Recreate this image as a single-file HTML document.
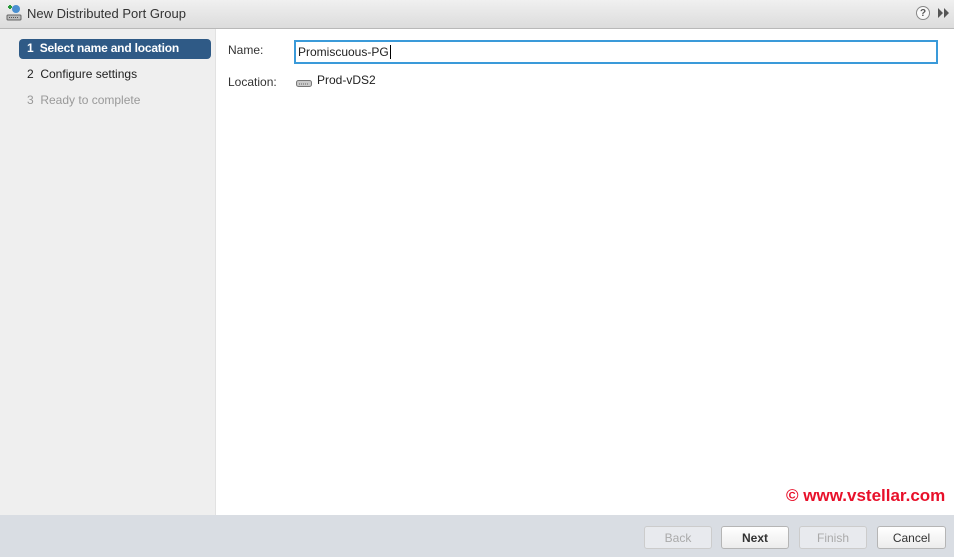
<!DOCTYPE html>
<html><head><style>
body{margin:0;width:954px;height:557px;position:relative;overflow:hidden;font-family:"Liberation Sans",sans-serif;font-size:12px;background:#fff;color:#333}
.hdr{position:absolute;left:0;top:0;width:954px;height:28px;background:linear-gradient(#f0f0f0,#dcdcdc);border-bottom:1px solid #b8b8b8}
.hdr .t{position:absolute;left:27px;top:6px;font-size:13px;color:#333}
.side{position:absolute;left:0;top:29px;width:215px;height:486px;background:#efefef;border-right:1px solid #e2e2e2}
.step{position:absolute;left:19px;width:192px;height:20px;line-height:19px;padding-left:8px;box-sizing:border-box;font-size:12px}
.sel{background:#2f5a86;color:#fff;font-weight:bold;border-radius:4px;letter-spacing:-0.2px}
.foot{position:absolute;left:0;top:515px;width:954px;height:42px;background:#d9dde3}
.btn{position:absolute;top:526px;height:23px;width:68px;border:1px solid #b5b5b5;border-radius:3px;background:linear-gradient(#fff,#ececec);text-align:center;line-height:23px;font-size:12px;color:#333;box-sizing:border-box}
.dis{color:#aaa;border-color:#ccc;background:#e8eaee}
</style></head><body>
<div class="hdr">
<svg style="position:absolute;left:5px;top:4px" width="18" height="18" viewBox="0 0 18 18"><circle cx="11" cy="5" r="4" fill="#4a8fd0"/><path d="M3 3h4M5 1v4" stroke="#2a9a3a" stroke-width="2"/><rect x="2" y="11" width="14" height="5" rx="1" fill="#bbb" stroke="#666"/><path d="M4 13.5h10" stroke="#555" stroke-dasharray="1 1"/></svg>
<div class="t">New Distributed Port Group</div>
<div style="position:absolute;left:916px;top:6px;width:14px;height:14px;border-radius:50%;border:1px solid #888;background:#fafafa;font-size:10px;font-weight:bold;text-align:center;line-height:14px;color:#555;box-sizing:border-box">?</div>
<svg style="position:absolute;left:938px;top:8px" width="12" height="10"><path d="M0 0L5 5L0 10ZM6 0L11 5L6 10Z" fill="#555"/></svg>
</div>
<div class="side">
<div class="step sel" style="top:10px">1&nbsp; Select name and location</div>
<div class="step" style="top:36px;color:#222">2&nbsp; Configure settings</div>
<div class="step" style="top:62px;color:#999">3&nbsp; Ready to complete</div>
</div>
<div style="position:absolute;left:228px;top:43px">Name:</div>
<div style="position:absolute;left:294px;top:40px;width:644px;height:24px;border:2px solid #3a9ad9;box-sizing:border-box;padding:3px 2px;font-size:12px;color:#222">Promiscuous-PG<span style="border-left:1px solid #000;margin-left:1px"></span></div>
<div style="position:absolute;left:228px;top:75px">Location:</div>
<svg style="position:absolute;left:296px;top:78px" width="16" height="9"><rect x="0.5" y="2.5" width="15" height="6" rx="2" fill="#c9c9c9" stroke="#777"/><path d="M3 6h10" stroke="#666" stroke-dasharray="1 1"/></svg>
<div style="position:absolute;left:317px;top:73px;color:#222">Prod-vDS2</div>
<div style="position:absolute;left:786px;top:486px;color:#e8102a;font-weight:bold;font-size:17px">© www.vstellar.com</div>
<div class="foot"></div>
<div class="btn dis" style="left:644px">Back</div>
<div class="btn" style="left:721px;font-weight:bold">Next</div>
<div class="btn dis" style="left:799px">Finish</div>
<div class="btn" style="left:877px;width:69px">Cancel</div>
</body></html>
